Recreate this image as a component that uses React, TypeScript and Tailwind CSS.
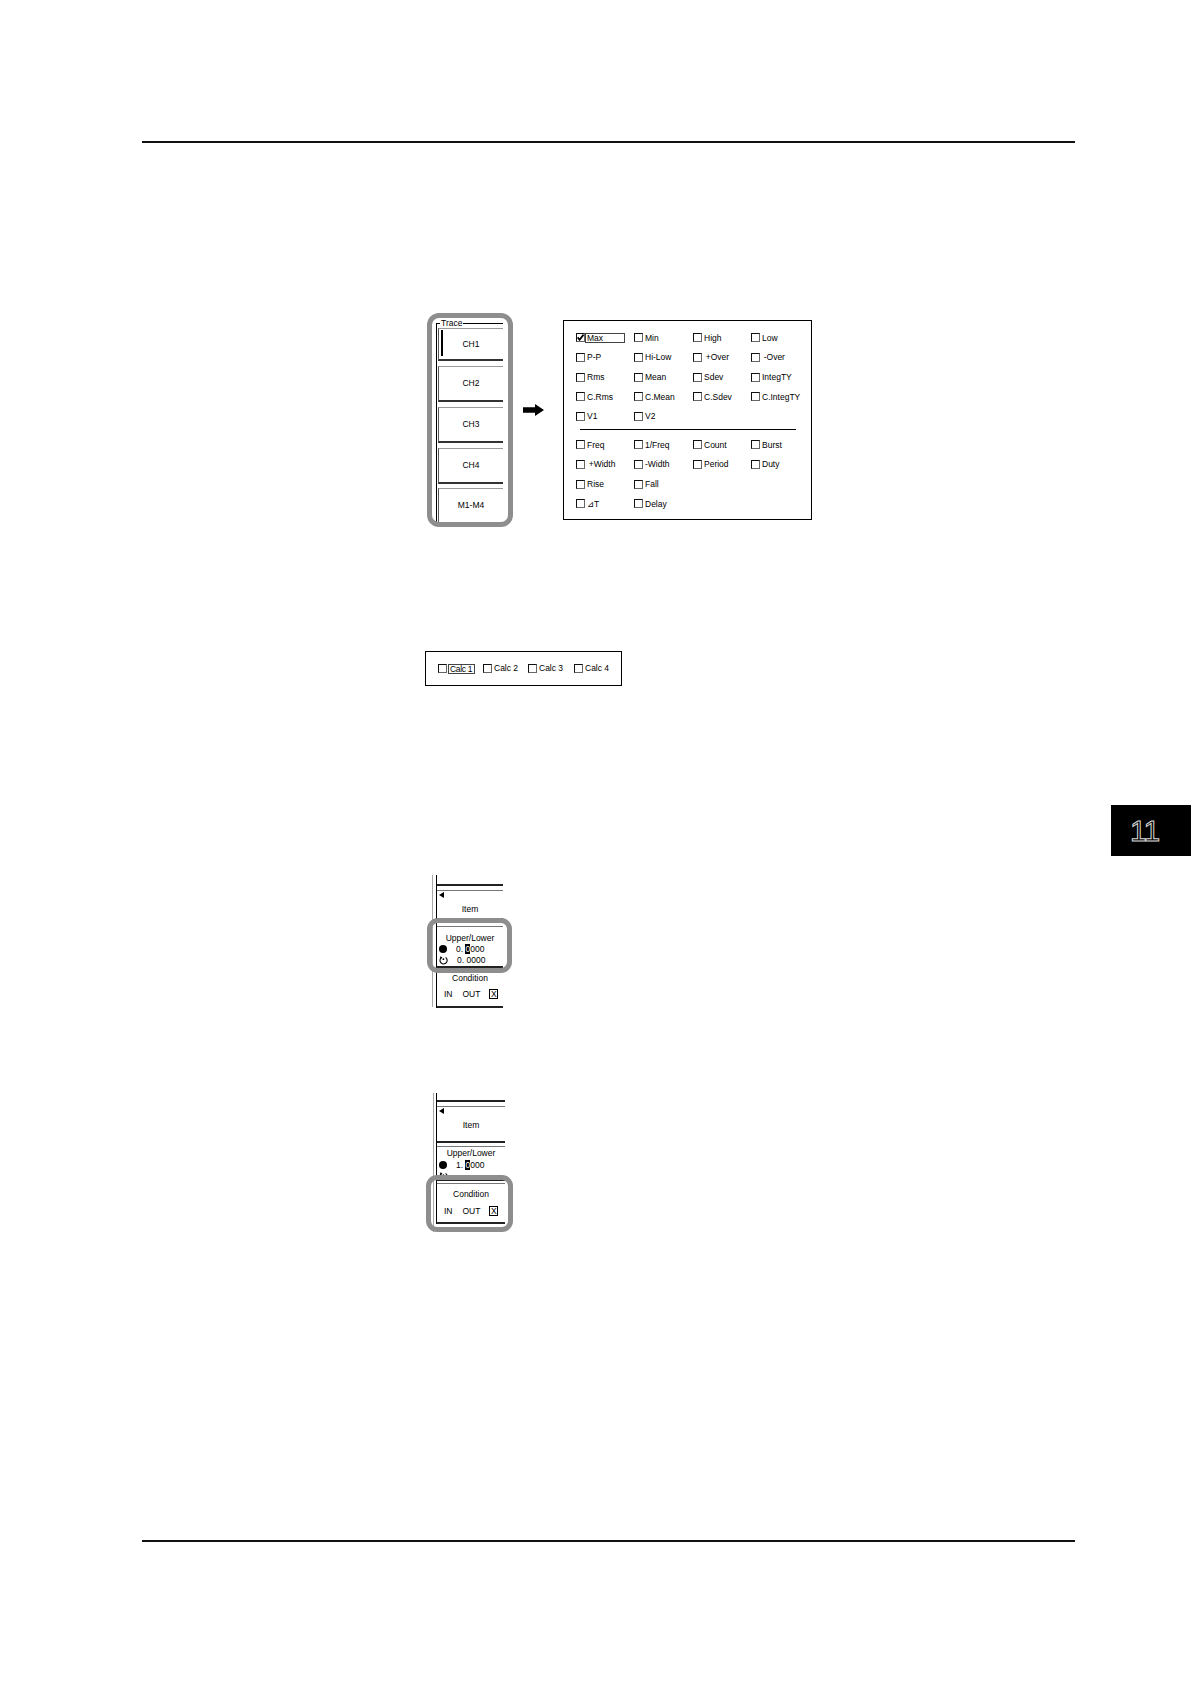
import React from "react";

/**
 * Manual page: measure setup screens (trace select, calc select,
 * upper/lower and condition menus) with highlight frames.
 */

const TOP_ROWS: string[][] = [
  ["Max", "Min", "High", "Low"],
  ["P-P", "Hi-Low", "\u2009+Over", "\u2009-Over"],
  ["Rms", "Mean", "Sdev", "IntegTY"],
  ["C.Rms", "C.Mean", "C.Sdev", "C.IntegTY"],
  ["V1", "V2"],
];

const BOTTOM_ROWS: string[][] = [
  ["Freq", "1/Freq", "Count", "Burst"],
  ["\u2009+Width", "-Width", "Period", "Duty"],
  ["Rise", "Fall"],
  ["\u22bfT", "Delay"],
];

function Box({ checked = false }: { checked?: boolean }) {
  return (
    <span className="block w-[9px] h-[9px] shrink-0 border border-[#111] border-r-[#666] border-b-[#666] bg-white">
      {checked && (
        <svg width="7" height="7" viewBox="0 0 7 7" className="block">
          <path d="M0.6 3.4 L2.6 5.8 L6.6 0.6" fill="none" stroke="#000" strokeWidth="1.8" />
        </svg>
      )}
    </span>
  );
}

function CheckItem({ label, checked, focus }: { label: string; checked?: boolean; focus?: boolean }) {
  return (
    <div className="flex items-center h-[19.7px]">
      <Box checked={checked} />
      {focus ? (
        <span className="h-[10px] w-[40px] border border-[#444] pl-[1px] leading-[8px]">{label}</span>
      ) : (
        <span className="ml-[2px] leading-none whitespace-nowrap">{label}</span>
      )}
    </div>
  );
}

function TraceButton({ label, selected, className }: { label: string; selected?: boolean; className: string }) {
  return (
    <div
      className={
        "relative flex items-center justify-center shrink-0 border-t border-t-[#9a9a9a] border-l border-l-[#555] border-b-2 border-b-[#333] " +
        className
      }
    >
      {selected && <span className="absolute left-[2px] top-[1px] bottom-[3px] w-[2px] bg-black" />}
      <span className="leading-none">{label}</span>
    </div>
  );
}

function TracePanel() {
  return (
    <div className="w-[86px] h-[214px] shrink-0 border-[5px] border-[#8e8e8e] rounded-[12px] overflow-hidden pl-[4px] pt-[5px] bg-white">
      <div className="relative w-[67px] h-full border-l border-t border-black pl-[1px] pt-[4px] flex flex-col">
        <span className="absolute -top-[6px] left-[3px] bg-white px-[1px] leading-[11px]">Trace</span>
        <TraceButton label="CH1" selected className="h-[33px]" />
        <TraceButton label="CH2" className="mt-[5px] h-[36px]" />
        <TraceButton label="CH3" className="mt-[5px] h-[36px]" />
        <TraceButton label="CH4" className="mt-[5px] h-[36px]" />
        <TraceButton label="M1-M4" className="mt-[4px] h-[36px]" />
      </div>
    </div>
  );
}

function MeasurePanel() {
  return (
    <div className="mt-[7px] ml-[19px] w-[249px] h-[200px] border border-black pt-[7px] pl-[12px]">
      <div className="grid grid-cols-[58px_59px_58px_58px]">
        {TOP_ROWS.map((row, r) =>
          [0, 1, 2, 3].map((c) =>
            row[c] ? (
              <CheckItem key={`t${r}${c}`} label={row[c]} checked={r === 0 && c === 0} focus={r === 0 && c === 0} />
            ) : (
              <div key={`t${r}${c}`} className="h-[19.7px]" />
            )
          )
        )}
      </div>
      <div className="mt-[3px] ml-[4px] w-[216px] h-px bg-black" />
      <div className="mt-[4.5px] grid grid-cols-[58px_59px_58px_58px]">
        {BOTTOM_ROWS.map((row, r) =>
          [0, 1, 2, 3].map((c) =>
            row[c] ? (
              <CheckItem key={`b${r}${c}`} label={row[c]} />
            ) : (
              <div key={`b${r}${c}`} className="h-[19.7px]" />
            )
          )
        )}
      </div>
    </div>
  );
}

function CalcPanel() {
  const items = ["Calc 1", "Calc 2", "Calc 3", "Calc 4"];
  return (
    <div className="mt-[124px] ml-[425px] w-[197px] h-[35px] border border-black flex items-center pl-[12px]">
      {items.map((t, i) => (
        <div key={t} className={"flex items-center " + (i === 2 ? "w-[46px]" : "w-[45px]")}>
          <Box />
          {i === 0 ? (
            <span className="ml-px h-[10px] w-[27px] border border-[#444] pl-px leading-[8px] whitespace-nowrap tracking-[-0.3px]">
              {t}
            </span>
          ) : (
            <span className="ml-[2px] leading-none whitespace-nowrap">{t}</span>
          )}
        </div>
      ))}
    </div>
  );
}

function LeftTriangle() {
  return (
    <svg width="5" height="6" viewBox="0 0 5 6" className="block ml-[2px]">
      <polygon points="5,0 5,6 0,3" fill="#000" />
    </svg>
  );
}

function Dot() {
  return (
    <svg width="8" height="8" viewBox="0 0 8 8" className="block shrink-0">
      <circle cx="4" cy="4" r="4" fill="#000" />
    </svg>
  );
}

function Knob() {
  return (
    <svg width="9" height="9" viewBox="0 0 9 9" className="block shrink-0">
      <path d="M2.3 1.6 A3.6 3.6 0 1 0 6.6 1.4" fill="none" stroke="#000" strokeWidth="1.1" />
      <path d="M0.8 0.6 L3.4 1.0 L2.0 3.2 Z" fill="#000" />
      <circle cx="4.4" cy="3.2" r="0.9" fill="#000" />
    </svg>
  );
}

function ValueRow({ icon, lead }: { icon: "dot" | "knob"; lead?: string }) {
  return (
    <div className="flex items-center h-[11px] pl-[2px]">
      {icon === "dot" ? <Dot /> : <Knob />}
      {lead != null && (
        <span className="ml-[9px] leading-none whitespace-pre">
          {lead}
          {icon === "dot" ? <span className="bg-black text-white">0</span> : "0"}
          000
        </span>
      )}
    </div>
  );
}

function ConditionRow() {
  return (
    <div className="flex items-center h-[11px] pl-[7px]">
      <span className="leading-none">IN</span>
      <span className="ml-[10px] leading-none">OUT</span>
      <span className="ml-[9px] w-[9px] h-[10px] border border-black flex items-center justify-center leading-none">X</span>
    </div>
  );
}

function Highlight({ className }: { className: string }) {
  return <div className={"absolute border-[5px] border-[#8e8e8e] rounded-[11px] " + className} />;
}

function UpperLowerFigure() {
  return (
    <div className="mt-[19px] ml-[427px] relative w-[90px] h-[135px] flex">
      <div className="ml-[5px] w-[4px] h-[132px] border-l border-[#a8a8a8]" />
      <div className="w-[67px] h-[133px] border-l border-black flex flex-col">
        <div className="h-[11px] shrink-0 border-b-2 border-[#222]" />
        <div className="mt-[4px] h-[30px] shrink-0 border-t border-[#777] border-b-2 border-b-[#222] flex flex-col">
          <div className="mt-px">
            <LeftTriangle />
          </div>
          <div className="mt-[5.5px] leading-[11px] text-center">Item</div>
        </div>
        <div className="mt-[6px] h-[41.5px] shrink-0 border-t border-[#777] border-b-2 border-b-[#222] pt-[5.5px]">
          <div className="leading-[11px] text-center">Upper/Lower</div>
          <ValueRow icon="dot" lead="0. " />
          <ValueRow icon="knob" lead="0. " />
        </div>
        <div className="mt-[2.5px] flex-1 border-t border-[#777] border-b-2 border-b-[#222] pt-[1.5px]">
          <div className="leading-[11px] text-center">Condition</div>
          <div className="mt-[5px]">
            <ConditionRow />
          </div>
        </div>
      </div>
      <Highlight className="left-0 top-[43px] w-[85px] h-[55px]" />
    </div>
  );
}

function ConditionFigure() {
  return (
    <div className="mt-[83px] ml-[426px] relative w-[90px] h-[142px] flex">
      <div className="ml-[7px] w-[3px] h-[139px] border-l border-[#a8a8a8]" />
      <div className="w-[69px] h-[131px] border-l border-black flex flex-col">
        <div className="h-[9px] shrink-0 border-b-2 border-[#222]" />
        <div className="mt-[4px] h-[37px] shrink-0 border-t border-[#777] border-b-2 border-b-[#222] flex flex-col">
          <div className="mt-[0.5px]">
            <LeftTriangle />
          </div>
          <div className="mt-[6px] leading-[11px] text-center">Item</div>
        </div>
        <div className="mt-[3px] h-[35px] shrink-0 overflow-hidden border-t border-[#777] border-b-2 border-b-[#222] pt-[0.5px]">
          <div className="leading-[11px] text-center">Upper/Lower</div>
          <div className="mt-px">
            <ValueRow icon="dot" lead="1. " />
          </div>
          <ValueRow icon="knob" />
        </div>
        <div className="mt-[2px] flex-1 border-t border-[#777] border-b-2 border-b-[#222] pt-[4.5px]">
          <div className="leading-[11px] text-center">Condition</div>
          <div className="mt-[6px]">
            <ConditionRow />
          </div>
        </div>
      </div>
      <Highlight className="left-0 top-[82px] w-[87px] h-[57px]" />
    </div>
  );
}

export default function App() {
  return (
    <div className="w-[1191px] h-[1684px] bg-white flex flex-col text-black text-[8.5px] font-['Liberation_Sans','DejaVu_Sans',Arial,sans-serif]">
      <div className="mt-[141px] ml-[142px] w-[933px] h-[2px] bg-[#111]" />

      <div className="mt-[170px] ml-[427px] flex items-start">
        <TracePanel />
        <svg width="21" height="12" viewBox="0 0 21 12" className="block mt-[91px] ml-[10px] shrink-0">
          <path d="M0 3.3H12V0L21 6L12 12V8.7H0Z" fill="#000" />
        </svg>
        <MeasurePanel />
      </div>

      <CalcPanel />

      <div className="mt-[119px] self-end w-[80px] h-[51px] bg-black flex items-center pl-[19px]">
        <span className="text-[30px] leading-none text-transparent tracking-[-1px] [-webkit-text-stroke:1px_#d9d9d9]">
          11
        </span>
      </div>

      <UpperLowerFigure />
      <ConditionFigure />

      <div className="mt-[305px] ml-[142px] w-[933px] h-[2px] bg-[#111]" />
    </div>
  );
}
